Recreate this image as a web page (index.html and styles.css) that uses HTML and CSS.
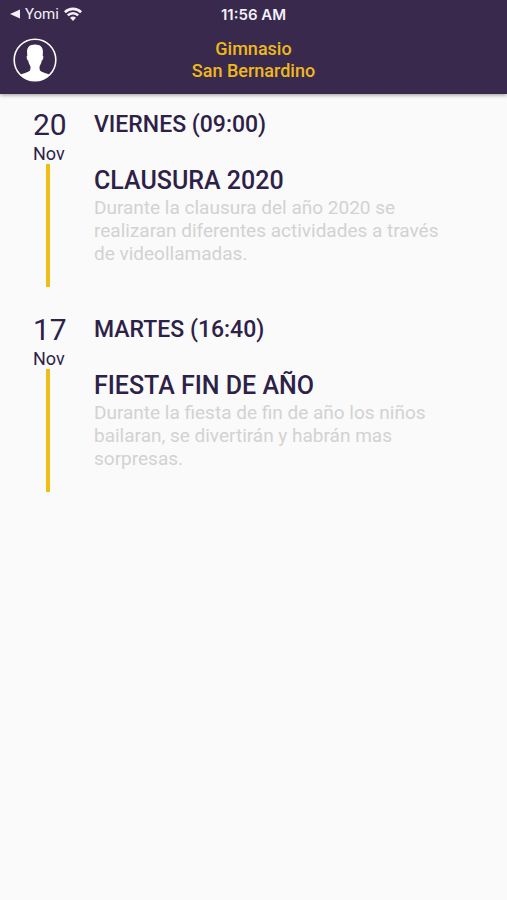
FILE: index.html
```html
<!DOCTYPE html>
<html lang="es">
  <head>
    <meta charset="UTF-8" />
    <meta name="viewport" content="width=device-width, initial-scale=1.0" />
    <title>Gimnasio San Bernardino</title>
    <link rel="stylesheet" href="styles.css">
  </head>
  <body>
    <header class="header">
      <div class="status-bar">
        <a href="#" class="status-back">
          <svg class="back-icon" viewBox="0 0 10 10" aria-hidden="true">
            <path d="M0 5 10 0.5v9z" fill="currentColor" />
          </svg>
          Yomi
          <svg class="wifi-icon" viewBox="0 0 18 14" aria-hidden="true">
            <g fill="none" stroke="currentColor" stroke-width="2.6">
              <path d="M0.9 5.2a11.6 11.6 0 0 1 16.2 0" />
              <path d="M3.8 8.4a7.3 7.3 0 0 1 10.4 0" />
            </g>
            <path d="M6 10.8a4.4 4.4 0 0 1 6 0L9 13.9z" fill="currentColor" />
          </svg>
        </a>
        <span class="status-time">11:56 AM</span>
      </div>
      <div class="app-bar">
        <button class="profile-btn" aria-label="Perfil">
          <svg class="profile-icon" viewBox="0 0 44 44" aria-hidden="true">
            <clipPath id="profile-clip"><circle cx="22" cy="22" r="21" /></clipPath>
            <path
              clip-path="url(#profile-clip)"
              fill="#fff"
              d="M22 6.5c6 0 8.300 3.300 7.900 8l-.2 3.300c.8.2.8 1.500.4 2.800-.3 1.300-.8 2-1.400 2.200-.4 2.400-1.100 4-2.100 5.400-.2 2.200 0 3.600.6 4.600 1.500 1.700 8.600 2.800 12.300 5.800V44H4.500v-5.400c3.700-3 10.800-4.100 12.300-5.800.6-1 .8-2.400.6-4.600-1-1.400-1.700-3-2.100-5.400-.6-.2-1.100-.9-1.400-2.200-.4-1.300-.4-2.600.4-2.800l-.2-3.300c-.4-4.700 1.900-8 7.900-8z"
            />
            <circle cx="22" cy="22" r="20.8" fill="none" stroke="#fff" stroke-width="1.6" />
          </svg>
        </button>
        <h1 class="app-title">Gimnasio<br />San Bernardino</h1>
      </div>
    </header>

    <main class="events">
      <article class="event">
        <div class="event-date">
          <span class="day">20</span>
          <span class="month">Nov</span>
          <div class="line"></div>
        </div>
        <div class="event-info">
          <p class="event-time">VIERNES (09:00)</p>
          <h2 class="event-title">CLAUSURA 2020</h2>
          <p class="event-text">
            Durante la clausura del año 2020 se realizaran diferentes
            actividades a través de videollamadas.
          </p>
        </div>
      </article>

      <article class="event">
        <div class="event-date">
          <span class="day">17</span>
          <span class="month">Nov</span>
          <div class="line"></div>
        </div>
        <div class="event-info">
          <p class="event-time">MARTES (16:40)</p>
          <h2 class="event-title">FIESTA FIN DE AÑO</h2>
          <p class="event-text">
            Durante la fiesta de fin de año los niños bailaran, se divertirán
            y habrán mas sorpresas.
          </p>
        </div>
      </article>
    </main>
  </body>
</html>
```
FILE: styles.css
```css
body {
  margin: 0;
  background-color: #fafafa;
  color: #2d2148;
  font-family: Roboto, "Liberation Sans", sans-serif;
}

h1,
h2,
p {
  margin: 0;
  font-weight: 500;
}

.header {
  background-color: #38294d;
  box-shadow: 0 1px 4px rgba(0, 0, 0, 0.4);
}

/* Tres columnas para que la hora y el titulo queden centrados */
.status-bar,
.app-bar {
  display: grid;
  grid-template-columns: 1fr auto 1fr;
  align-items: center;
}

.status-bar {
  height: 28px;
  padding: 0 10px;
  color: #f4eff8;
  font-family: Inter, sans-serif;
  font-size: 15px;
}

.status-back {
  display: flex;
  align-items: center;
  gap: 5px;
  color: inherit;
  font-family: Roboto, sans-serif;
  font-size: 15px;
  text-decoration: none;
}

.back-icon {
  width: 10px;
  height: 10px;
}

.wifi-icon {
  width: 18px;
  height: 14px;
}

.status-time {
  font-weight: 600;
}

.app-bar {
  padding: 10px 13px 12px;
}

.profile-btn {
  justify-self: start;
  padding: 0;
  border: none;
  background-color: transparent;
  cursor: pointer;
}

.profile-icon {
  display: block;
  width: 44px;
  height: 44px;
}

.app-title {
  color: #efb81c;
  font-size: 18px;
  line-height: 22px;
  text-align: center;
}

.events {
  display: flex;
  flex-direction: column;
  gap: 24px;
  padding: 12px 64px 32px 33px;
}

.event {
  display: flex;
  gap: 31px;
}

.event-date {
  display: flex;
  flex-direction: column;
  width: 30px;
}

.day {
  font-size: 30px;
  line-height: 38px;
}

.month {
  font-size: 18px;
  line-height: 20px;
}

.line {
  flex: 1;
  align-self: center;
  width: 4px;
  background-color: #efbd18;
}

.event-info {
  flex: 1;
  padding-bottom: 22px;
}

.event-time {
  font-size: 23px;
  line-height: 38px;
}

.event-title {
  margin-top: 22px;
  font-size: 25px;
  line-height: 30px;
}

.event-text {
  color: #d2d2d2;
  font-size: 19px;
  font-weight: 400;
  line-height: 23px;
}
```
